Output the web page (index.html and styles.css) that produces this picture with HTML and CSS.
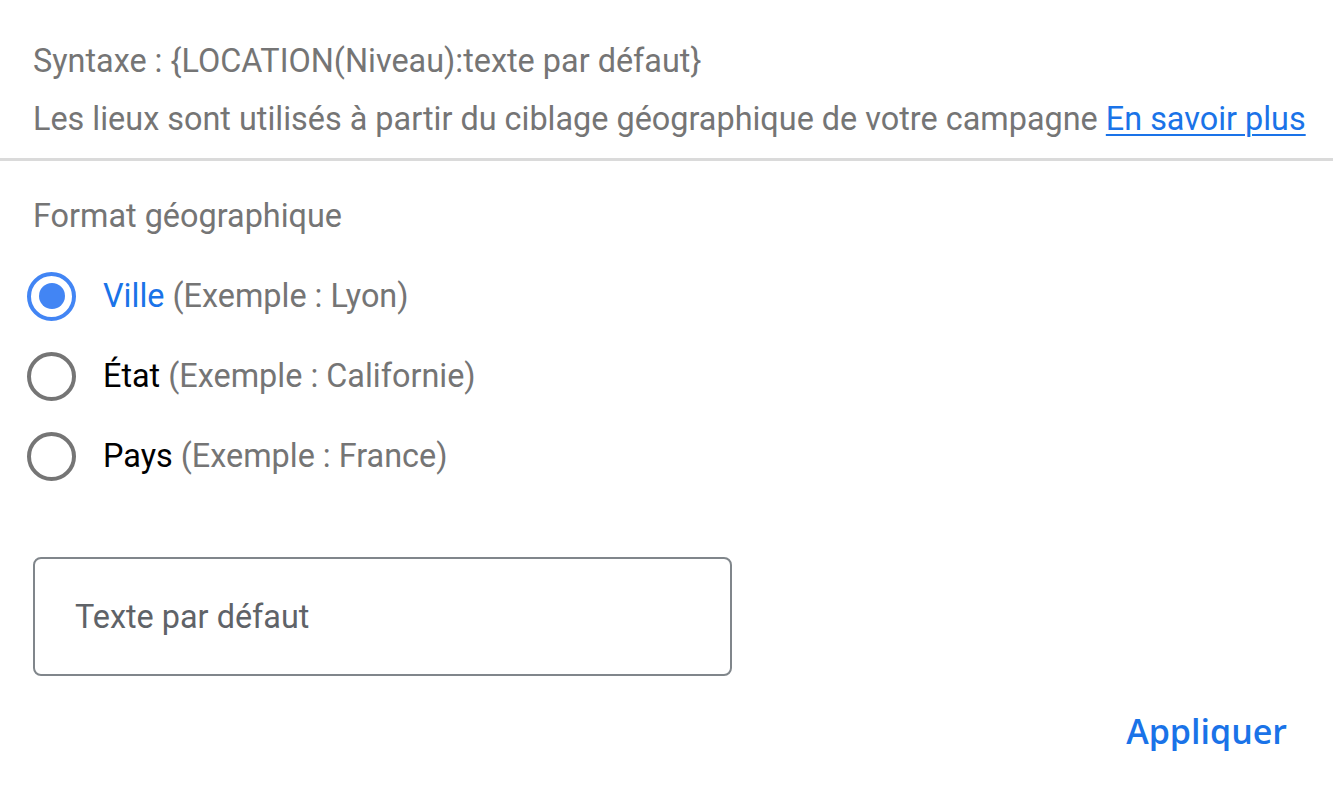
FILE: index.html
```html
<!DOCTYPE html>
<html lang="fr">
<head>
<meta charset="utf-8">
<link rel="stylesheet" href="styles.css">
</head>
<body>
<div class="dialog">
  <div class="info">
    <div class="line">Syntaxe : {LOCATION(Niveau):texte par défaut}</div>
    <div class="line">Les lieux sont utilisés à partir du ciblage géographique de votre campagne <a class="link" href="#">En savoir plus</a></div>
  </div>
  <div class="separator"></div>
  <div class="body">
    <div class="heading">Format géographique</div>
    <div class="radios">
      <label class="radio checked">
        <span class="circle"><span class="dot"></span></span>
        <span class="label"><span class="name">Ville</span> <span class="example">(Exemple : Lyon)</span></span>
      </label>
      <label class="radio">
        <span class="circle"></span>
        <span class="label"><span class="name">État</span> <span class="example">(Exemple : Californie)</span></span>
      </label>
      <label class="radio">
        <span class="circle"></span>
        <span class="label"><span class="name">Pays</span> <span class="example">(Exemple : France)</span></span>
      </label>
    </div>
    <div class="field">
      <span class="placeholder">Texte par défaut</span>
    </div>
    <div class="actions">
      <button class="apply">Appliquer</button>
    </div>
  </div>
</div>
</body>
</html>
```
FILE: styles.css
```css
html, body {
  margin: 0;
  padding: 0;
  background: #ffffff;
}
body {
  font-family: Roboto, "Liberation Sans", sans-serif;
  color: #757575;
}
.dialog {
  width: 1333px;
}
.info {
  padding: 32px 0 10px 33px;
}
.line {
  font-size: 32.4px;
  line-height: 58px;
  white-space: nowrap;
}
.link {
  color: #1a73e8;
  text-decoration: underline;
  text-decoration-thickness: 2px;
  text-underline-offset: 4px;
}
.separator {
  height: 3px;
  background: #dadada;
}
.body {
  padding: 26px 46px 0 33px;
}
.heading {
  font-size: 32.4px;
  line-height: 58px;
}
.radios {
  margin-top: 11px;
  display: flex;
  flex-direction: column;
}
.radio {
  height: 80px;
  display: flex;
  align-items: center;
  gap: 27px;
  margin-left: -6px;
}
.circle {
  box-sizing: border-box;
  width: 49px;
  height: 49px;
  border: 4.5px solid #757575;
  border-radius: 50%;
  display: flex;
  align-items: center;
  justify-content: center;
}
.radio.checked .circle {
  border-color: #4285f4;
}
.dot {
  width: 26px;
  height: 26px;
  border-radius: 50%;
  background: #4285f4;
}
.label {
  font-size: 32.4px;
  color: #757575;
}
.name {
  color: #000000;
}
.radio.checked .name {
  color: #1a73e8;
}
.field {
  margin-top: 61px;
  box-sizing: border-box;
  width: 699px;
  height: 119px;
  border: 2px solid #80868b;
  border-radius: 8px;
  display: flex;
  align-items: center;
  padding-left: 40px;
}
.placeholder {
  font-size: 32.4px;
  color: #5f6368;
}
.actions {
  margin-top: 35px;
  display: flex;
  justify-content: flex-end;
}
.apply {
  border: none;
  background: none;
  padding: 0;
  font-family: "Open Sans", Roboto, sans-serif;
  font-weight: 600;
  font-size: 34px;
  line-height: 40px;
  color: #1a73e8;
  letter-spacing: 0;
}
```
